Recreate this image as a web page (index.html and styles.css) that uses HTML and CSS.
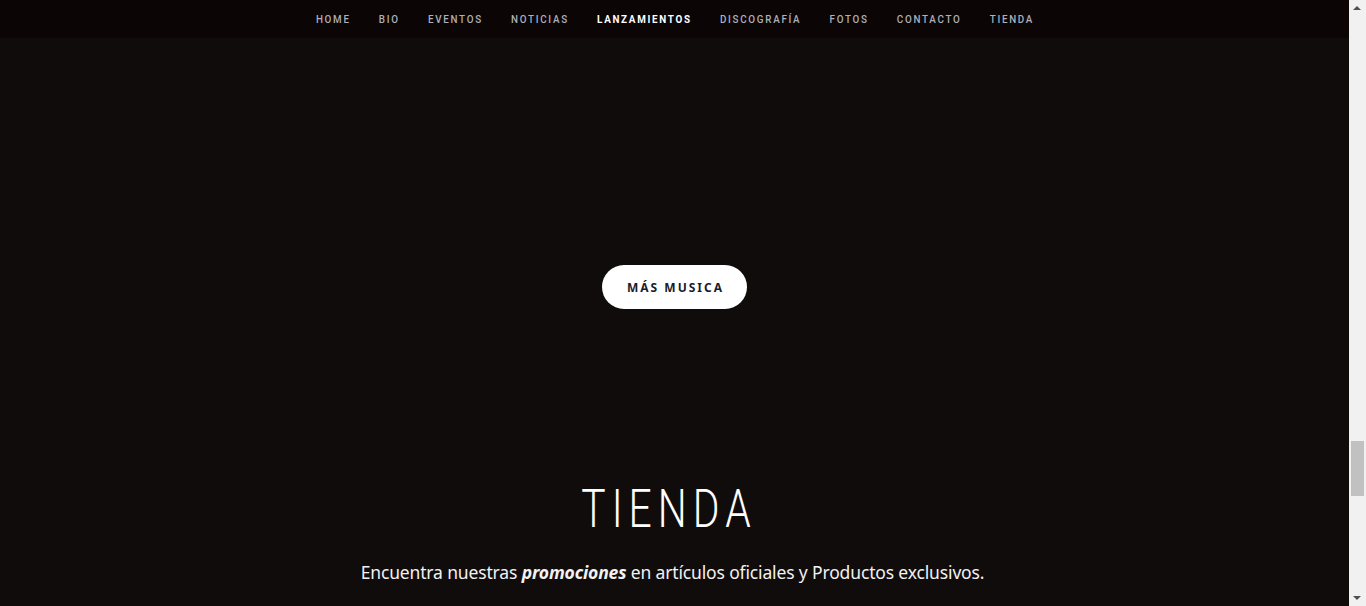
FILE: index.html
```html
<!DOCTYPE html>
<html lang="es">
<head>
<meta charset="utf-8">
<title>Tienda</title>
<link rel="stylesheet" href="styles.css">
</head>
<body>
<div class="page">
  <div class="content">
    <nav class="nav">
      <div class="nav-links">
        <a class="nav-item" href="#">HOME</a>
        <a class="nav-item" href="#">BIO</a>
        <a class="nav-item" href="#">EVENTOS</a>
        <a class="nav-item" href="#">NOTICIAS</a>
        <a class="nav-item active" href="#">LANZAMIENTOS</a>
        <a class="nav-item" href="#">DISCOGRAFÍA</a>
        <a class="nav-item" href="#">FOTOS</a>
        <a class="nav-item" href="#">CONTACTO</a>
        <a class="nav-item" href="#">TIENDA</a>
      </div>
    </nav>
    <section class="music">
      <a class="btn" href="#">MÁS MUSICA</a>
    </section>
    <section class="shop">
      <h2 class="shop-title"><span class="shop-title-text">TIENDA</span></h2>
      <p class="shop-text">Encuentra nuestras <strong><em>promociones</em></strong> en artículos oficiales y Productos exclusivos.</p>
    </section>
  </div>
  <div class="scrollbar">
    <div class="sb-arrow sb-up"></div>
    <div class="sb-track"><div class="sb-thumb"></div></div>
    <div class="sb-arrow sb-down"></div>
  </div>
</div>
</body>
</html>
```

FILE: styles.css
```css
html, body {
  margin: 0;
  padding: 0;
  height: 100%;
  overflow: hidden;
}
body {
  background: #110c0c;
  font-family: "Noto Sans", "DejaVu Sans", sans-serif;
}
.page {
  display: flex;
  height: 606px;
}
.content {
  flex: 1;
  display: flex;
  flex-direction: column;
  min-width: 0;
}
.nav {
  height: 38px;
  background: #0c0505;
  display: flex;
  justify-content: center;
  align-items: center;
}
.nav-links {
  display: flex;
  gap: 33px;
  transform: scaleX(0.855);
}
.nav-item {
  font-family: "Roboto", sans-serif;
  font-size: 11.5px;
  font-weight: 500;
  letter-spacing: 2px;
  color: #acb0b8;
  text-decoration: none;
}
.nav-item.active {
  color: #ffffff;
  font-weight: bold;
}
.music {
  display: flex;
  justify-content: center;
  padding-top: 227px;
  height: 44px;
}
.btn {
  display: flex;
  align-items: center;
  justify-content: center;
  width: 145px;
  height: 44px;
  border-radius: 22px;
  background: #ffffff;
  color: #1b1b2b;
  font-family: "Noto Sans", sans-serif;
  font-weight: bold;
  font-size: 12px;
  letter-spacing: 2px;
  text-decoration: none;
  padding-left: 2px;
  box-sizing: border-box;
}
.shop {
  text-align: center;
  padding-top: 170px;
}
.shop-title {
  margin: 0;
  font-family: "Roboto", sans-serif;
  font-weight: 300;
  font-size: 54px;
  line-height: 60px;
  letter-spacing: 8px;
  color: #ffffff;
}
.shop-title-text {
  display: inline-block;
  padding-right: 15px;
  transform: scaleX(0.755);
}
.shop-text {
  margin: 21px 0 0;
  font-size: 17.5px;
  color: #f2f2f2;
  letter-spacing: -0.15px;
  padding-right: 4px;
}
.shop-text strong {
  font-weight: bold;
}
.scrollbar {
  width: 17px;
  background: #f1f1f1;
  display: flex;
  flex-direction: column;
}
.sb-arrow {
  height: 17px;
  position: relative;
}
.sb-up::after, .sb-down::after {
  content: "";
  position: absolute;
  left: 4px;
  width: 0;
  height: 0;
  border-left: 4px solid transparent;
  border-right: 4px solid transparent;
}
.sb-up::after {
  top: 6px;
  border-bottom: 4px solid #505050;
}
.sb-down::after {
  top: 7px;
  border-top: 4px solid #505050;
}
.sb-track {
  flex: 1;
  padding-top: 424px;
}
.sb-thumb {
  margin: 0 2px;
  height: 55px;
  background: #c1c1c1;
}
```
